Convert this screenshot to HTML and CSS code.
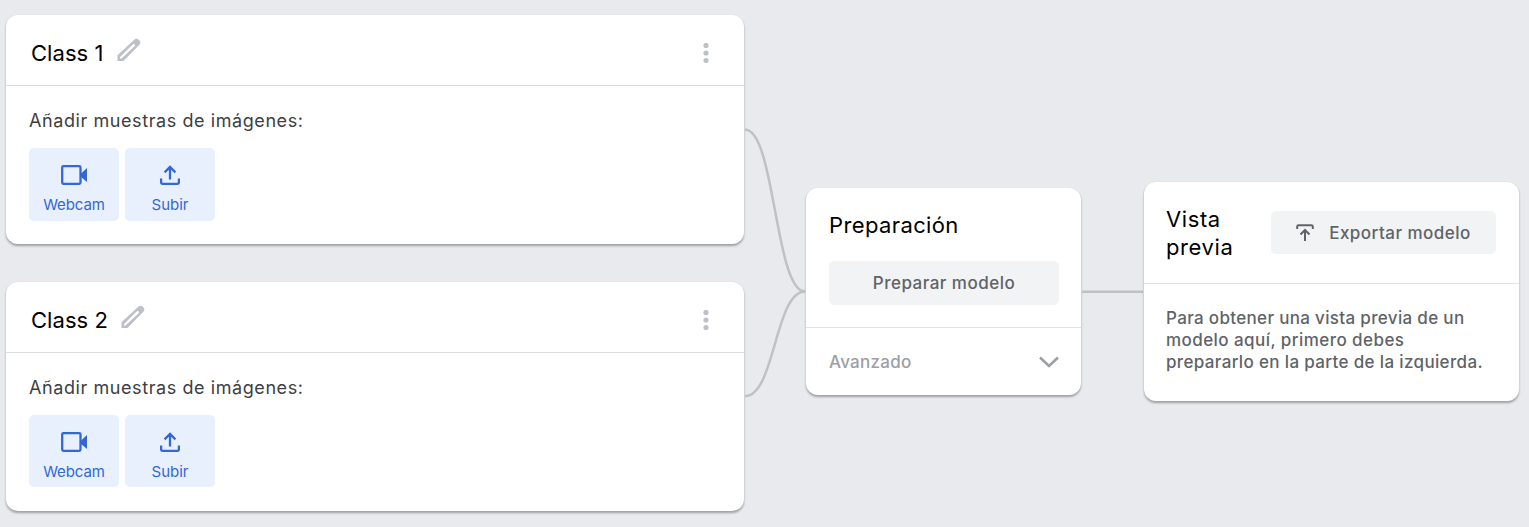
FILE: index.html
```
<!DOCTYPE html>
<html lang="es">
<head>
<meta charset="utf-8">
<title>Class 1</title>
<link rel="stylesheet" href="styles.css">
</head>
<body>
<svg class="defs" width="0" height="0">
  <symbol id="pencil" viewBox="0 0 24 24"><path fill-rule="evenodd" d="M.5 17.300 17.200 1.700Q19.500-.2 21.700 1.700L22.500 2.500Q24.300 4.500 22.400 6.800L6.500 23H.5ZM2.900 19.300V20.600H4.500L17.600 8.200Q18.300 7 17.400 6.200 16.500 5.600 15.600 6.500Z"/></symbol>
  <symbol id="more" viewBox="0 0 6 20"><circle cx="3" cy="2.500" r="2.600"/><circle cx="3" cy="10" r="2.600"/><circle cx="3" cy="17.500" r="2.600"/></symbol>
  <symbol id="webcam" viewBox="0 0 26 20"><rect x="1.200" y="1.200" width="18.300" height="17.600" rx="1.200" fill="none" stroke="currentColor" stroke-width="2.300"/><path d="M19.500 9 26 3V17L19.500 11.500Z"/></symbol>
  <symbol id="upload" viewBox="0 0 20 20"><path d="M1.100 13.500V17.300Q1.100 18.800 2.600 18.800H17.400Q18.900 18.800 18.900 17.300V13.500M10 14.500V2M4.600 7.400 10 2 15.400 7.400" fill="none" stroke="currentColor" stroke-width="2.300"/></symbol>
</svg>
<main class="board">
  <section class="classes">
    <article class="card">
      <header class="class-head">
        <h2 class="title class-name">Class 1</h2>
        <svg class="pencil"><use href="#pencil"/></svg>
        <svg class="more"><use href="#more"/></svg>
      </header>
      <div class="class-body">
        <p class="label">Añadir muestras de imágenes:</p>
        <div class="sources">
          <button class="source"><svg class="cam"><use href="#webcam"/></svg><span class="webcam-text">Webcam</span></button>
          <button class="source"><svg class="up"><use href="#upload"/></svg><span class="subir-text">Subir</span></button>
        </div>
      </div>
    </article>
    <article class="card">
      <header class="class-head">
        <h2 class="title class-name">Class 2</h2>
        <svg class="pencil"><use href="#pencil"/></svg>
        <svg class="more"><use href="#more"/></svg>
      </header>
      <div class="class-body">
        <p class="label">Añadir muestras de imágenes:</p>
        <div class="sources short">
          <button class="source"><svg class="cam"><use href="#webcam"/></svg><span class="webcam-text">Webcam</span></button>
          <button class="source"><svg class="up"><use href="#upload"/></svg><span class="subir-text">Subir</span></button>
        </div>
      </div>
    </article>
  </section>
  <svg class="links" viewBox="0 0 62 527"><path d="M1 129.500C31 129.500 31 291.500 61 291.500M1 396C31 396 31 291.500 61 291.500"/></svg>
  <section class="card train">
    <div class="train-main">
      <h2 class="title train-title">Preparación</h2>
      <button class="action">Preparar modelo</button>
    </div>
    <div class="advanced"><span>Avanzado</span><svg class="chevron" viewBox="0 0 20 12"><path d="M1 1.500 10 10 19 1.500"/></svg></div>
  </section>
  <svg class="links" viewBox="0 0 63 527"><path d="M1 291.700H62"/></svg>
  <section class="card preview">
    <header class="preview-head">
      <h2 class="title preview-title">Vista previa</h2>
      <button class="action export"><svg class="export-icon" viewBox="0 0 18 18"><path d="M1.200 5V2.600Q1.200 1.200 2.600 1.200H15.400Q16.800 1.200 16.800 2.600V5M9 17V6M4.500 10.500 9 6 13.500 10.500"/></svg><span>Exportar modelo</span></button>
    </header>
    <p class="hint"><span class="hint-1">Para obtener una vista previa de un</span><br><span class="hint-2">modelo aquí, primero debes</span><br><span class="hint-3">prepararlo en la parte de la izquierda.</span></p>
  </section>
</main>
</body>
</html>
```
FILE: styles.css
```
* { box-sizing: border-box; }
body { margin: 0; background: #e8eaed; font-family: Inter, "Open Sans", sans-serif; }
h2, p { margin: 0; font-weight: 400; }
button { border: 0; font: inherit; padding: 0; }
svg { display: block; flex: none; fill: currentColor; }
.defs { position: absolute; }
.board { display: grid; grid-template-columns: 738px 62px 275px 63px 375px; height: 527px; padding-left: 6px; overflow: hidden; }
.card { background: #fff; border-radius: 12px; box-shadow: 0 1.500px 2px rgba(0,0,0,.2), 0 2px 3px rgba(0,0,0,.14); overflow: hidden; }
.title { color: #000; font-size: 22px; line-height: 28px; letter-spacing: .38px; }
.class-name { letter-spacing: .05px; }
.classes { display: flex; flex-direction: column; gap: 38px; padding-top: 15px; }
.classes .card { height: 229px; }
.class-head { display: flex; align-items: center; height: 71px; padding: 5px 35px 0 25px; border-bottom: 1px solid #dadce0; color: #bdc1c6; }
.pencil { width: 24px; height: 24px; margin: -6px 0 0 13.500px; }
.more { width: 6px; height: 20px; margin-left: auto; }
.class-body { padding: 23px 23px 0; }
.label { color: #3c4043; font-size: 18px; line-height: 24px; letter-spacing: .58px; white-space: nowrap; }
.sources { display: flex; gap: 6px; margin-top: 15px; }
.source { display: flex; flex-direction: column; align-items: center; width: 90px; height: 73px; padding-top: 17px; background: #e8f0fe; border-radius: 5px; color: #3367d6; font-size: 15px; line-height: 20px; gap: 10px; }
.short .source { height: 72px; }
.webcam-text { letter-spacing: -.1px; }
.cam { width: 26px; height: 20px; }
.up { width: 20px; height: 20px; }
.links { width: 100%; height: 527px; fill: none; stroke: #bfc1c5; stroke-width: 2.500; }
.train { height: 207px; margin-top: 188.400px; }
.train-main { height: 139.600px; padding: 23px 22px 0 23px; border-bottom: 1px solid #e0e2e5; }
.action { display: flex; align-items: center; justify-content: center; background: #f1f3f4; border-radius: 5px; color: #5f6368; font-size: 17px; font-weight: 500; letter-spacing: .48px; white-space: nowrap; }
.train .action { width: 230px; height: 44px; margin-top: 22px; }
.advanced { display: flex; align-items: center; justify-content: space-between; height: 67px; padding: 1px 22px 0 23px; color: #9aa0a6; font-size: 17px; font-weight: 500; letter-spacing: .27px; }
.chevron { width: 20px; height: 12px; fill: none; stroke: currentColor; stroke-width: 2.600; }
.preview { height: 219px; margin-top: 182.400px; }
.preview-head { display: flex; justify-content: space-between; height: 101.600px; padding: 23px 23px 0 22px; border-bottom: 1px solid #e0e2e5; }
.preview-title { width: 90px; letter-spacing: .6px; }
.export { width: 225px; height: 43px; margin-top: 6px; gap: 15px; }
.export-icon { width: 18px; height: 18px; fill: none; stroke: currentColor; stroke-width: 2; }
.hint { padding: 23px 22px 0; color: #5f6368; font-size: 17px; font-weight: 500; line-height: 22px; white-space: nowrap; }
.hint-1 { letter-spacing: .33px; }
.hint-2 { letter-spacing: .44px; }
.hint-3 { letter-spacing: .35px; }
```
